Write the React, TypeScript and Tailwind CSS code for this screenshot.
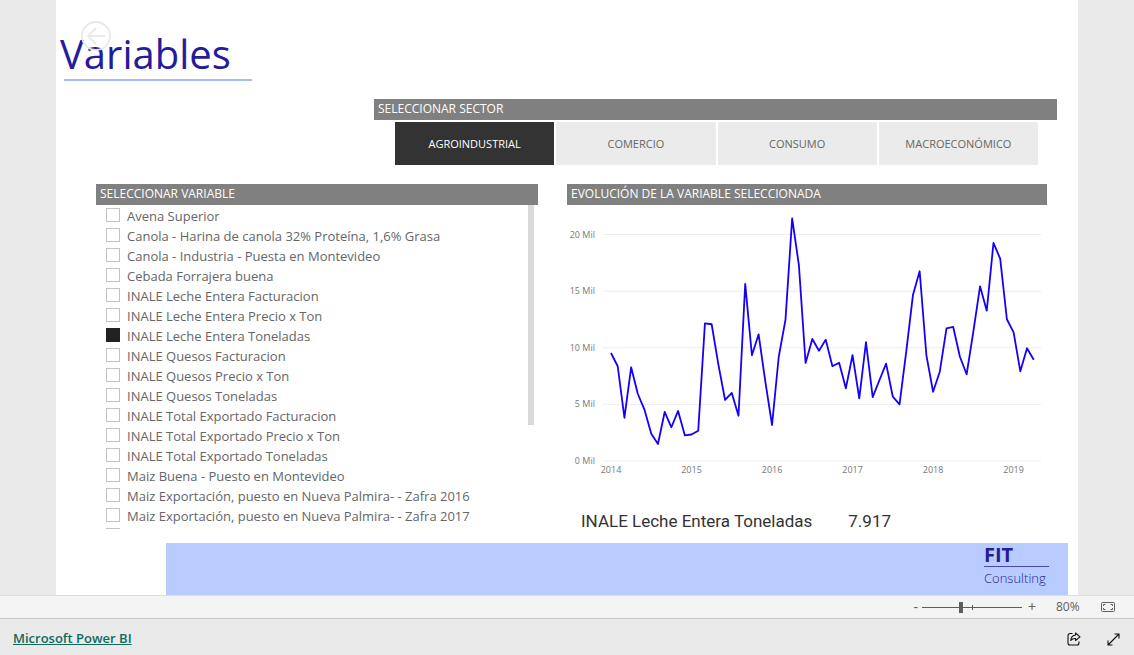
import { useState } from "react";

const sectors = ["AGROINDUSTRIAL", "COMERCIO", "CONSUMO", "MACROECONÓMICO"];

const variables = [
  "Avena Superior",
  "Canola - Harina de canola 32% Proteína, 1,6% Grasa",
  "Canola - Industria - Puesta en Montevideo",
  "Cebada Forrajera buena",
  "INALE Leche Entera Facturacion",
  "INALE Leche Entera Precio x Ton",
  "INALE Leche Entera Toneladas",
  "INALE Quesos Facturacion",
  "INALE Quesos Precio x Ton",
  "INALE Quesos Toneladas",
  "INALE Total Exportado Facturacion",
  "INALE Total Exportado Precio x Ton",
  "INALE Total Exportado Toneladas",
  "Maiz Buena - Puesto en Montevideo",
  "Maiz Exportación, puesto en Nueva Palmira- - Zafra 2016",
  "Maiz Exportación, puesto en Nueva Palmira- - Zafra 2017",
  "",
];

// Monthly values in thousands, from January 2014
const values = [
  9.54, 8.37, 3.82, 8.28, 5.92, 4.51, 2.41, 1.5, 4.33, 2.98, 4.42, 2.27,
  2.34, 2.68, 12.16, 12.08, 8.54, 5.39, 6.01, 4.0, 15.64, 9.34, 11.19, 7.01,
  3.18, 9.21, 12.46, 21.44, 17.31, 8.66, 10.78, 9.74, 10.72, 8.37, 8.68, 6.42,
  9.36, 5.54, 10.49, 5.65, 7.13, 8.6, 5.68, 5.01, 9.66, 14.66, 16.76, 9.36,
  6.12, 7.89, 11.72, 11.84, 9.21, 7.66, 11.42, 15.43, 13.28, 19.26, 17.87, 12.52,
  11.37, 7.92, 9.96, 8.95,
];

const years = [2014, 2015, 2016, 2017, 2018, 2019];
const ticks = [0, 5, 10, 15, 20];

const chartX = (month: number) => 44 + month * 6.71;
const chartY = (value: number) => 256 - value * 11.32;

const PanelTitle = ({ text }: { text: string }) => (
  <h2 className="bg-[#808080] text-white text-[12px] leading-5 h-[21px] px-1">{text}</h2>
);

const LineChart = () => (
  <svg viewBox="0 0 480 280" className="w-full h-auto block" role="img" aria-label="Evolución de la variable">
    {ticks.map((t) => (
      <g key={t}>
        <line x1="36" x2="474" y1={chartY(t)} y2={chartY(t)} stroke="#ececec" />
        <text x="28" y={chartY(t) + 3} textAnchor="end" fontSize="9" fill="#777">
          {t} Mil
        </text>
      </g>
    ))}
    {years.map((y, i) => (
      <text key={y} x={chartX(i * 12)} y="268" textAnchor="middle" fontSize="9" fill="#777">
        {y}
      </text>
    ))}
    <polyline
      points={values.map((v, i) => `${chartX(i)},${chartY(v)}`).join(" ")}
      fill="none"
      stroke="#1500fa"
      strokeWidth="1.8"
      strokeLinejoin="round"
    />
  </svg>
);

const App = () => {
  const [sector, setSector] = useState("AGROINDUSTRIAL");
  const [variable, setVariable] = useState("INALE Leche Entera Toneladas");
  const [zoom, setZoom] = useState(80);

  return (
    <div className="bg-[#eaeaea] font-['Open_Sans','Noto_Sans',sans-serif] min-h-screen flex flex-col">
      <main className="bg-white mx-14">
        <header className="relative h-[99px] pt-7 pl-1">
          <h1 className="text-[40px] leading-[51px] text-[#241c9c]">Variables</h1>
          <div className="ml-1 w-[188px] h-0.5 bg-[#9fbcff]" />
          <button aria-label="Volver" className="absolute left-[25px] top-[21px]">
            <svg width="30" height="30" viewBox="0 0 30 30" fill="none" stroke="#e9e9e9" strokeWidth="1.8">
              <circle cx="15" cy="15" r="14" />
              <path d="M24 15H7M15 7L7 15l8 8" />
            </svg>
          </button>
        </header>

        <section className="ml-[318px] mr-[21px]">
          <PanelTitle text="SELECCIONAR SECTOR" />
          <div className="grid grid-cols-4 gap-0.5 ml-[21px] mr-[19px] mt-0.5">
            {sectors.map((s) => (
              <button
                key={s}
                onClick={() => setSector(s)}
                className={
                  s === sector
                    ? "h-[43px] pt-0.5 text-[11px] bg-[#333333] text-white"
                    : "h-[43px] pt-0.5 text-[11px] bg-[#ebebeb] text-[#666666]"
                }
              >
                {s}
              </button>
            ))}
          </div>
        </section>

        <div className="grid grid-cols-[442fr_480fr] gap-[29px] ml-10 mr-[31px] mt-[19px]">
          <section>
            <PanelTitle text="SELECCIONAR VARIABLE" />
            <div className="flex h-[324px] pl-2.5 pr-1">
              <ul className="flex-1 overflow-hidden">
                {variables.map((v) => (
                  <li key={v} className="h-5">
                    <label className="flex items-start gap-[7px] h-5">
                      <input
                        type="checkbox"
                        checked={v === variable}
                        onChange={() => setVariable(v)}
                        className="appearance-none shrink-0 mt-[3px] size-3.5 border border-[#c3c3c3] bg-white checked:bg-[#222222] checked:border-[#222222]"
                      />
                      <span className="text-[13px] leading-[22px] text-[#666666] whitespace-nowrap">{v}</span>
                    </label>
                  </li>
                ))}
              </ul>
              <div className="w-1.5 h-[220px] bg-[#d9d9d9]" />
            </div>
          </section>

          <section>
            <PanelTitle text="EVOLUCIÓN DE LA VARIABLE SELECCIONADA" />
            <LineChart />
            <p className="flex gap-9 pl-3.5 mt-6 text-[17px] leading-6 text-[#333333] font-['Roboto',sans-serif]">
              <span>{variable}</span>
              <span>7.917</span>
            </p>
          </section>
        </div>

        <footer className="flex justify-end bg-[#b9ccff] h-[52px] ml-[110px] mr-2.5 mt-2.5 pr-[19px] text-[#241c9c]">
          <div className="w-[65px]">
            <p className="text-[20px] leading-[23px] font-bold">FIT</p>
            <div className="h-px bg-[#4a45b5]" />
            <p className="text-[13px] leading-[22px] font-light">Consulting</p>
          </div>
        </footer>
      </main>

      <div className="flex items-center justify-end h-6 bg-[#f4f4f4] border-t border-t-[#dddddd] border-b border-b-[#c8c8c8] pr-[19px] text-[#605e5c]">
        <button aria-label="Alejar" className="text-[14px] leading-5">-</button>
        <div className="relative flex items-center mx-1">
          <input
            type="range"
            aria-label="Zoom"
            min="10"
            max="190"
            value={zoom}
            onChange={(e) => setZoom(Number(e.target.value))}
            className="appearance-none w-[100px] h-px bg-[#605e5c] [&::-webkit-slider-thumb]:appearance-none [&::-webkit-slider-thumb]:w-1 [&::-webkit-slider-thumb]:h-[11px] [&::-webkit-slider-thumb]:bg-[#605e5c]"
          />
          <span className="absolute left-1/2 w-px h-[5px] bg-[#605e5c]" />
        </div>
        <button aria-label="Acercar" className="ml-0.5 text-[14px] leading-5">+</button>
        <span className="ml-5 w-[45px] text-[12px]">{zoom}%</span>
        <button aria-label="Ajustar a la página">
          <svg width="14" height="10" viewBox="0 0 14 10" fill="none" stroke="#605e5c">
            <rect x="0.5" y="0.5" width="13" height="9" rx="1" />
            <path d="M2.5 4V2.5H4.5M9.5 2.5H11.5V4M11.5 6V7.5H9.5M4.5 7.5H2.5V6" />
          </svg>
        </button>
      </div>

      <div className="flex flex-1 items-center justify-between pl-[13px] pr-3.5 pt-1">
        <a href="#" className="text-[13px] font-semibold text-[#0f6b5c] underline">
          Microsoft Power BI
        </a>
        <div className="flex items-center gap-[26px]">
          <button aria-label="Compartir">
            <svg width="14" height="14" viewBox="0 0 14 14" fill="none" stroke="#111" strokeWidth="1.1" strokeLinejoin="round">
              <path d="M5.5 1.5H3a2 2 0 0 0-2 2V11a2 2 0 0 0 2 2h7a2 2 0 0 0 2-2V9.5" />
              <path d="M8.5 1L13 4.8 8.5 8.5V6.5C6.5 6.3 5 7 3.8 8.5 4 5.5 5.7 3.3 8.5 3z" />
            </svg>
          </button>
          <button aria-label="Pantalla completa">
            <svg width="13" height="13" viewBox="0 0 13 13" fill="none" stroke="#111" strokeWidth="1.1">
              <path d="M1 12L12 1M7.5 1H12V5.5M1 7.5V12H5.5" />
            </svg>
          </button>
        </div>
      </div>
    </div>
  );
};

export default App;
